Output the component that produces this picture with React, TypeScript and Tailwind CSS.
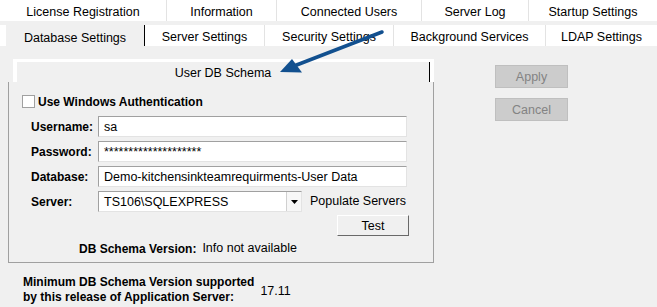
import React from 'react';

const topTabs = [
  { label: 'License Registration', w: 'w-[167px]' },
  { label: 'Information', w: 'w-[110px]' },
  { label: 'Connected Users', w: 'w-[145px]' },
  { label: 'Server Log', w: 'w-[107px]' },
  { label: 'Startup Settings', w: 'w-[128px]' },
];

const secondTabs = [
  { label: 'Server Settings', w: 'w-[120px]' },
  { label: 'Security Settings', w: 'w-[129px]' },
  { label: 'Background Services', w: 'w-[152px]' },
  { label: 'LDAP Settings', w: 'w-[111px]' },
];

function Tab({ label, w, last }: { label: string; w: string; last?: boolean }) {
  return (
    <div className={`${w} flex items-center justify-center`}>
      <div className={`flex h-full w-full items-center justify-center pt-[4px] ${last ? '' : 'border-r border-[#e3e3e3]'}`}>
        {label}
      </div>
    </div>
  );
}

function Field({ label, value }: { label: string; value: string }) {
  return (
    <div className="mt-[4px] flex h-[21px] items-center first:mt-0">
      <div className="w-[67px] pl-[22px] pt-[1px] box-content font-bold text-[12px]">{label}</div>
      <div className="flex h-[21px] w-[309px] items-center border border-t-[#a0a0a0] border-l-[#a0a0a0] border-r-[#e3e3e3] border-b-[#e3e3e3] bg-white pl-[5px] pt-[1px]">
        {value}
      </div>
    </div>
  );
}

export default function App() {
  return (
    <div
      className="relative h-[307px] w-[657px] overflow-hidden bg-[#f0f0f0] text-[12.5px] leading-none text-black"
      style={{ fontFamily: '"Liberation Sans", Arial, sans-serif' }}
    >
      {/* Tab rows */}
      <div className="flex h-[21px] bg-white">
        {topTabs.map((t, i) => (
          <Tab key={t.label} label={t.label} w={t.w} last={i === topTabs.length - 1} />
        ))}
      </div>
      <div className="mt-[4px] flex h-[21px] bg-white">
        <div className="w-[6px]" />
        <div className="flex w-[139px] items-center justify-center border-r border-black bg-[#f0f0f0] pt-[5px]">
          Database Settings
        </div>
        {secondTabs.map((t, i) => (
          <Tab key={t.label} label={t.label} w={t.w} last={i === secondTabs.length - 1} />
        ))}
      </div>

      <div className="flex">
        {/* Left panel */}
        <div className="w-[434px]">
          <div className="ml-[13px] mt-[13px] flex h-[23px] w-[421px] border-l-[4px] border-r-[4px] border-t-[3px] border-white bg-[#f0f0f0]">
            <div className="flex flex-1 items-center justify-center pt-[2px]">User DB Schema</div>
            <div className="w-px bg-black" />
          </div>

          <div className="ml-[8px] h-[181px] w-[426px] border border-t-0 border-[#a0a0a0] pt-[13px]">
            <div className="flex h-[13px] items-center pl-[13px]">
              <div className="h-[13px] w-[13px] border border-[#a0a0a0] bg-white" />
              <span className="ml-[3px] pt-[1px] text-[12px] font-bold">Use Windows Authentication</span>
            </div>

            <div className="mt-[8px] flex flex-col">
              <Field label="Username:" value="sa" />
              <Field label="Password:" value="********************" />
              <Field label="Database:" value="Demo-kitchensinkteamrequirments-User Data" />
              <div className="mt-[4px] flex h-[21px] items-center">
                <div className="w-[67px] pl-[22px] pt-[1px] box-content text-[12px] font-bold">Server:</div>
                <div className="flex h-[21px] w-[204px] items-center border border-t-[#a0a0a0] border-l-[#a0a0a0] border-r-[#e3e3e3] border-b-[#e3e3e3] bg-white">
                  <span className="flex-1 pl-[5px] pt-[1px]">TS106\SQLEXPRESS</span>
                  <div className="flex h-full w-[15px] items-center justify-center border-l border-[#d0d0d0] bg-[#f7f7f7]">
                    <svg width="7" height="4" viewBox="0 0 7 4">
                      <path d="M0 0h7L3.5 4z" fill="#000" />
                    </svg>
                  </div>
                </div>
                <span className="ml-[8px]">Populate Servers</span>
              </div>
            </div>

            <div className="mt-[3px] flex justify-end pr-[24px]">
              <button className="flex h-[21px] w-[72px] items-center justify-center border border-t-white border-l-white border-r-[#696969] border-b-[#696969] bg-[#f0f0f0] pt-[1px]">
                Test
              </button>
            </div>

            <div className="mt-[4px] flex h-[16px] items-center pl-[70px] pt-[1px]">
              <span className="text-[12px] font-bold">DB Schema Version:</span>
              <span className="ml-[6px]">Info not available</span>
            </div>
          </div>

          <div className="ml-[23px] mt-[12px] flex items-center">
            <div className="text-[12px] font-bold leading-[15px]">
              <div>Minimum DB Schema Version supported</div>
              <div>by this release of Application Server:</div>
            </div>
            <span className="ml-[6px] pt-[2px]">17.11</span>
          </div>
        </div>

        {/* Right buttons */}
        <div className="ml-[61px] mt-[19px] flex flex-col gap-[10px]">
          <button className="flex h-[23px] w-[73px] items-center justify-center border border-[#bfbfbf] bg-[#cccccc] pt-[1px] text-[#838383]">
            Apply
          </button>
          <button className="flex h-[23px] w-[73px] items-center justify-center border border-[#bfbfbf] bg-[#cccccc] pt-[1px] text-[#838383]">
            Cancel
          </button>
        </div>
      </div>

      {/* Annotation arrow */}
      <svg className="pointer-events-none absolute left-0 top-0" width="657" height="307">
        <line x1="382" y1="32" x2="294" y2="66" stroke="#12508f" strokeWidth="3.5" strokeLinecap="round" />
        <polygon points="280,72 292,59 302,72.5" fill="#12508f" />
      </svg>
    </div>
  );
}
